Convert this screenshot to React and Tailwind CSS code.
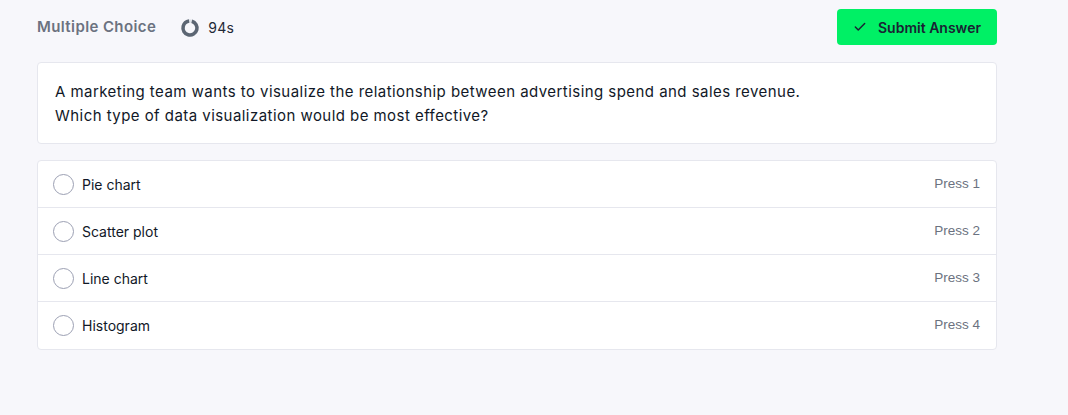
import React from 'react';

const options = [
  { label: 'Pie chart', key: 1 },
  { label: 'Scatter plot', key: 2 },
  { label: 'Line chart', key: 3 },
  { label: 'Histogram', key: 4 },
];

const Timer = () => (
  <svg width="20" height="20" viewBox="0 0 20 20">
    <circle cx="10" cy="10" r="7" fill="none" stroke="#e2e5ea" strokeWidth="3.5" />
    <circle
      cx="10" cy="10" r="7" fill="none" stroke="#5c6673" strokeWidth="3.5"
      strokeDasharray="41 44" transform="rotate(-75 10 10)"
    />
  </svg>
);

export default function App() {
  return (
    <div className="min-h-[415px] bg-[#f7f7fb] font-['Inter',sans-serif] text-[#101828]">
      <div className="w-[960px] ml-[37px] pt-[9px]">
        {/* Header */}
        <div className="flex items-center justify-between h-[36px]">
          <div className="flex items-center pt-[1px]">
            <span className="text-[15px] font-semibold tracking-[0.4px] text-[#6b7280]">Multiple Choice</span>
            <span className="ml-[24px] flex items-center gap-[8px]">
              <Timer />
              <span className="text-[14px] tracking-[0.3px] text-[#1f2937]">94s</span>
            </span>
          </div>
          <button className="flex items-center justify-center gap-[11px] w-[160px] h-[36px] rounded-[4px] bg-[#00f065] text-[14px] font-semibold text-[#1a2233]">
            <svg width="14" height="14" viewBox="0 0 24 24" fill="none" stroke="currentColor" strokeWidth="2.5" strokeLinecap="round" strokeLinejoin="round">
              <path d="M20 6 9 17l-5-5" />
            </svg>
            Submit Answer
          </button>
        </div>

        {/* Question */}
        <div className="mt-[17px] bg-white border border-[#e6e7ee] rounded-[4px] px-[17px] pt-[17px] pb-[15px] text-[15px] leading-[24px] tracking-[0.45px] text-[#111827]">
          <p>A marketing team wants to visualize the relationship between advertising spend and sales revenue.</p>
          <p>Which type of data visualization would be most effective?</p>
        </div>

        {/* Options */}
        <div className="mt-[16px] bg-white border border-[#e6e7ee] rounded-[4px] divide-y divide-[#e6e7ee]">
          {options.map((o) => (
            <div key={o.key} className="flex items-center justify-between h-[47px] pl-[15px] pr-[16px]">
              <div className="flex items-center gap-[8px]">
                <span className="w-[21px] h-[21px] rounded-full border-[1.5px] border-[#9ca0b3]" />
                <span className="text-[14px] text-[#111827]">{o.label}</span>
              </div>
              <span className="font-['Liberation_Sans',sans-serif] text-[13.5px] text-[#6b7280]">Press {o.key}</span>
            </div>
          ))}
        </div>
      </div>
    </div>
  );
}
